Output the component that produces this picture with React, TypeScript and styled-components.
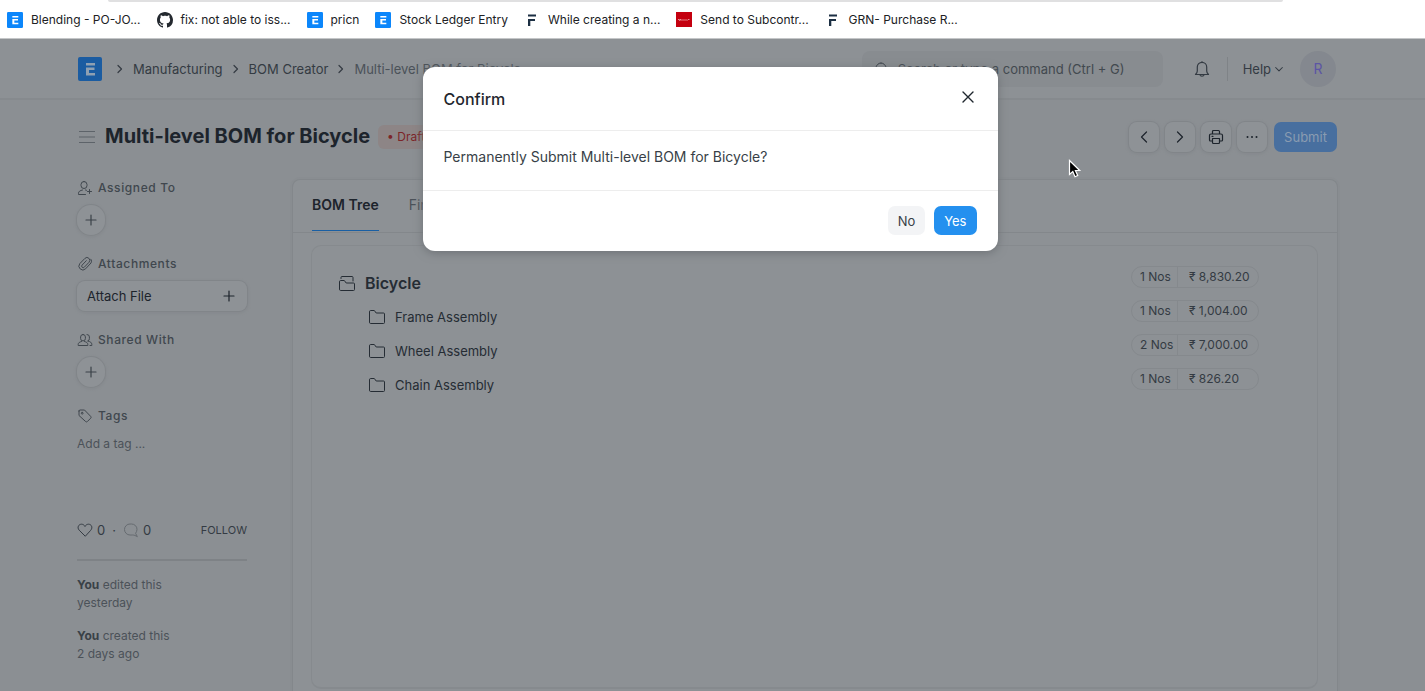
import React from "react";
import styled, { createGlobalStyle } from "styled-components";

const ink = "#1d242c";
const body = "#343b43";
const muted = "#4b5259";
const line = "#83878b";
const canvas = "#8b8f93";
const surface = "#8d9195";

const Global = createGlobalStyle`
  * { box-sizing: border-box; }
  body { margin: 0; background: ${canvas}; }
  body, button, input { font-family: Inter, "Liberation Sans", sans-serif; font-size: 13px; line-height: 18px; color: ${body}; }
  button { border: 0; padding: 0; background: none; cursor: pointer; }
  a { color: inherit; text-decoration: none; }
  h1, h2, p, ul { margin: 0; padding: 0; }
  ul { list-style: none; }
  svg { display: block; flex: none; }
`;

const Screen = styled.div`
  position: relative;
  display: flex;
  flex-direction: column;
  min-height: 100vh;
  overflow: hidden;
`;

/* Browser chrome */
const Chrome = styled.div`
  background: #fff;
  height: 39px;
  border-bottom: 1px solid #c4c6c8;
`;
const AddressEdge = styled.div`
  height: 2px;
  margin: 0 142px 0 108px;
  background: #e0e0e1;
  border-radius: 0 0 8px 8px;
`;
const Bookmarks = styled.nav`
  display: flex;
  gap: 16px;
  padding: 9px 7px 0;
`;
const Bookmark = styled.a`
  display: flex;
  align-items: center;
  gap: 8px;
  font-size: 12px;
  color: #202124;
  white-space: nowrap;
`;

/* Navigation bar */
const Navbar = styled.header`
  display: flex;
  align-items: center;
  height: 61px;
  padding: 0 89px 0 78px;
  border-bottom: 2px solid #868a8e;
  background: ${surface};
`;
const Crumbs = styled.nav`
  display: flex;
  align-items: center;
  flex: 1;
  gap: 5px;
  color: ${body};
  white-space: nowrap;
`;
const Home = styled.a`
  margin-right: 5px;
`;
const Current = styled.span`
  color: ${muted};
`;
const Search = styled.label`
  display: flex;
  align-items: center;
  gap: 8px;
  width: 301px;
  height: 36px;
  padding: 0 12px;
  border-radius: 8px;
  background: #888c90;
`;
const SearchInput = styled.input`
  flex: 1;
  min-width: 0;
  border: 0;
  padding: 0;
  outline: none;
  background: transparent;
  &::placeholder { color: #42494f; opacity: 1; }
`;
const IconButton = styled.button`
  display: flex;
  margin: 0 16px 0 30px;
`;
const Rule = styled.span`
  width: 1px;
  height: 24px;
  background: #7f8387;
`;
const Help = styled.button`
  display: flex;
  align-items: center;
  gap: 2px;
  margin: 0 15px 0 15px;
`;
const Avatar = styled.button`
  width: 36px;
  height: 36px;
  border-radius: 50%;
  background: #84888f;
  color: #5c55a5;
  font-size: 14px;
`;

/* Page heading */
const PageHead = styled.div`
  display: flex;
  align-items: center;
  height: 79px;
  padding: 0 88px 6px 79px;
`;
const Title = styled.h1`
  margin: 0 8px 2px 10px;
  font-size: 20px;
  line-height: 28px;
  font-weight: 700;
  color: ${ink};
  white-space: nowrap;
`;
const Status = styled.span`
  padding: 3px 9px;
  border-radius: 6px;
  background: #8d8586;
  color: #7c2529;
  font-size: 12px;
`;
const Actions = styled.div`
  display: flex;
  gap: 6px;
  margin-left: auto;
`;
const Tool = styled.button`
  display: flex;
  align-items: center;
  justify-content: center;
  width: 30px;
  height: 30px;
  border-radius: 8px;
  background: #8e9296;
  box-shadow: 0 0 0 1px #818589, 0 1px 2px 2px #878b8f;
  color: ${ink};
`;
const Submit = styled.button`
  width: 63px;
  height: 30px;
  margin-left: 1px;
  border-radius: 7px;
  background: #486f9f;
  color: #8a9cb1;
`;

/* Columns */
const Columns = styled.div`
  display: flex;
  flex: 1;
  gap: 45px;
  padding: 0 87px 0 77px;
`;
const Sidebar = styled.aside`
  width: 170px;
  flex: none;
  color: ${muted};
`;
const Section = styled.section`
  margin-bottom: 20px;
`;
const Label = styled.h2`
  display: flex;
  align-items: center;
  gap: 5px;
  margin-bottom: 8px;
  font-size: 12px;
  line-height: 18px;
  font-weight: 500;
  letter-spacing: 0.05em;
  color: #40474e;
`;
const Round = styled(Tool)`
  width: 28px;
  border-radius: 15px;
  color: #3a4148;
`;
const Attach = styled(Tool)`
  width: 100%;
  padding: 0 10px;
  justify-content: space-between;
`;
const AddTag = styled.button`
  display: block;
  margin-top: 10px;
  font-size: 12px;
  color: ${muted};
`;
const Social = styled.div`
  display: flex;
  align-items: center;
  gap: 4px;
  margin-top: 68px;
  padding-bottom: 20px;
  border-bottom: 2px solid #7e8286;
  color: ${body};
`;
const Dot = styled.span`
  margin: 0 3px;
`;
const Follow = styled.button`
  margin-left: auto;
  font-size: 11px;
`;
const Activity = styled.p`
  margin: 15px 0;
  font-size: 12px;
`;
const Strong = styled.b`
  font-weight: 700;
  color: #3a4147;
`;

const Panel = styled.main`
  display: flex;
  flex-direction: column;
  flex: 1;
  min-width: 0;
  border: 1px solid ${line};
  border-bottom: 0;
  border-radius: 8px 8px 0 0;
  box-shadow: 0 0 0 2px #898d91;
  background: ${surface};
`;
const Tabs = styled.div`
  display: flex;
  gap: 30px;
  height: 53px;
  padding: 0 19px;
  border-bottom: 1px solid ${line};
`;
const Tab = styled.button<{ $active?: boolean }>`
  height: 51px;
  border-bottom: 1px solid ${(p) => (p.$active ? "#1a5fa3" : "transparent")};
  font-size: 14px;
  font-weight: ${(p) => (p.$active ? 600 : 400)};
  color: ${(p) => (p.$active ? ink : muted)};
`;
const Tree = styled.div`
  flex: 1;
  margin: 12px 19px 2px 18px;
  padding: 20px 58px 0 26px;
  border: 1px solid #868a8e;
  border-bottom-width: 2px;
  border-radius: 10px;
`;
const Row = styled.li<{ $child?: boolean }>`
  display: flex;
  align-items: center;
  height: 34px;
  padding-left: ${(p) => (p.$child ? 30 : 0)}px;
`;
const Name = styled.span<{ $root?: boolean }>`
  margin-left: 9px;
  font-size: ${(p) => (p.$root ? 16 : 13)}px;
  font-weight: ${(p) => (p.$root ? 600 : 400)};
  color: #252c34;
`;
const Pill = styled.span`
  display: grid;
  grid-template-columns: 46px 80px;
  align-self: flex-start;
  height: 22px;
  margin-left: auto;
  border: 1px solid #85898d;
  border-radius: 11px;
  font-size: 12px;
  line-height: 20px;
  color: ${body};
`;
const Qty = styled.span`
  padding-left: 8px;
  border-right: 1px solid #85898d;
`;
const Amount = styled.span`
  padding-left: 11px;
`;

/* Dialog */
const Layer = styled.div`
  position: absolute;
  inset: 67px 5px auto 0;
  display: flex;
  justify-content: center;
`;
const Dialog = styled.div`
  width: 575px;
  border-radius: 12px;
  background: #fff;
  box-shadow: 0 2px 10px #6e7276;
`;
const DialogHead = styled.div`
  display: flex;
  justify-content: space-between;
  align-items: center;
  height: 64px;
  padding: 0 21px;
  border-bottom: 1px solid #ededed;
`;
const DialogTitle = styled.h2`
  font-size: 16px;
  line-height: 24px;
  font-weight: 500;
  color: #1f272e;
`;
const Close = styled.button`
  display: flex;
  padding: 0 2px 4px;
`;
const DialogBody = styled.p`
  height: 60px;
  padding: 16px 21px;
  border-bottom: 1px solid #ededed;
  font-size: 14px;
  line-height: 20px;
  color: #383f47;
`;
const DialogFoot = styled.div`
  display: flex;
  justify-content: flex-end;
  gap: 9px;
  padding: 15px 21px 16px;
`;
const Choice = styled.button<{ $primary?: boolean }>`
  height: 29px;
  padding: 0 10px;
  border-radius: 7px;
  background: ${(p) => (p.$primary ? "#2490ef" : "#f3f4f6")};
  color: ${(p) => (p.$primary ? "#fff" : "#383f47")};
`;
const Pointer = styled.svg`
  position: absolute;
  left: 1068px;
  top: 159px;
`;

const Stroke = ({ size = 16, color = "currentColor", w = 1, d, vb = 16 }: { size?: number; color?: string; w?: number; d: string; vb?: number }) => (
  <svg width={size} height={size} viewBox={`0 0 ${vb} ${vb}`} fill="none" stroke={color} strokeWidth={w} strokeLinecap="round" strokeLinejoin="round" aria-hidden="true">
    <path d={d} />
  </svg>
);

const ErpLogo = ({ size, bg, fg }: { size: number; bg: string; fg: string }) => (
  <svg width={size} height={size} viewBox="0 0 24 24" aria-hidden="true">
    <rect width="24" height="24" rx="2" fill={bg} />
    <path d="M8 6h9v2.400H8zM8 10.500h8.500v2.400h-5.500v3.200H17v2.400H8z" fill={fg} />
  </svg>
);
const FrappeLogo = () => (
  <svg width="16" height="16" viewBox="0 0 16 16" aria-hidden="true">
    <path d="M4 2.500h8v2H4zM4 7h7v2H6.300v5H4z" fill="#1c2f43" />
  </svg>
);
const GitHubLogo = () => (
  <svg width="16" height="16" viewBox="0 0 16 16" aria-hidden="true">
    <path fill="#24292f" d="M8 0C3.580 0 0 3.580 0 8c0 3.540 2.290 6.530 5.470 7.590.4.070.55-.17.55-.38 0-.19-.01-.82-.01-1.490-2.010.37-2.530-.49-2.690-.94-.09-.23-.48-.94-.82-1.130-.28-.15-.68-.52-.01-.53.63-.01 1.080.58 1.230.82.72 1.210 1.870.87 2.330.66.070-.52.28-.87.51-1.070-1.780-.2-3.640-.89-3.640-3.950 0-.87.31-1.590.82-2.150-.08-.2-.36-1.020.08-2.120 0 0 .67-.21 2.200.82.64-.18 1.320-.27 2-.27s1.360.09 2 .27c1.530-1.040 2.200-.82 2.200-.82.44 1.100.16 1.920.08 2.120.51.56.82 1.270.82 2.150 0 3.070-1.870 3.750-3.650 3.950.29.25.54.73.54 1.480 0 1.070-.01 1.930-.01 2.200 0 .21.15.46.55.38A8.010 8.010 0 0 0 16 8c0-4.420-3.580-8-8-8z" />
  </svg>
);
const RedLogo = () => (
  <svg width="16" height="16" viewBox="0 0 16 16" aria-hidden="true">
    <rect width="16" height="15" fill="#c4000f" />
    <path d="M2 7.500h1l.5 1 .7-1.500.8 1.500 1-1 1 1 1-1 1 1 1-1 1 1 1-1h1.500" fill="none" stroke="#f0b0b4" strokeWidth=".8" />
  </svg>
);

const icons = {
  right: "M6 4.500 9.500 8 6 11.500",
  plus: "M8 3v10M3 8h10",
  user: "M7 1.500a3 3 0 0 1 3 3v1a3 3 0 0 1-6 0v-1a3 3 0 0 1 3-3zM8.500 14.500H1.500v-1.200c0-1.800 1.500-2.800 4-3.300M8.500 10l1 .3M12.500 9.500v4M10.500 11.500h4",
  clip: "M13.800 7.200 8.600 12.800a3.900 3.900 0 0 1-5.800-5.200L7.900 2.400a2.800 2.800 0 0 1 4.100 3.900L7.300 11.200a1.500 1.500 0 0 1-2.200-2.100l4.200-4.400M13.800 7.200c1-1.200 1-2.800 0-4",
  users: "M6 2.500a2.400 2.400 0 0 1 2.400 2.400v1.600a2.400 2.400 0 0 1-4.800 0V4.900A2.400 2.400 0 0 1 6 2.500zM4.500 9.500c-2 .5-3.300 1.300-3.300 2.900v1.100h9.600v-1.100c0-1.600-1.300-2.400-3.300-2.900M10 2.500a2.400 2.400 0 0 1 2.400 2.400v1.600A2.400 2.400 0 0 1 10.600 9c2.800.6 4.200 1.600 4.200 3.400v1.100H13",
  tag: "M2 3v4.500l6.600 6a1.300 1.300 0 0 0 1.800 0l3.300-3.300a1.300 1.300 0 0 0 0-1.800L7.500 2H3a1 1 0 0 0-1 1zM5.200 4.300a.9.9 0 1 1 0 1.800.9.9 0 0 1 0-1.800",
  heart: "M8 14 2.200 8.200C-.2 5.500 1.600 2.200 4.500 2.200c1.500 0 2.800.9 3.500 2.300.7-1.400 2-2.300 3.500-2.300 2.900 0 4.700 3.300 2.300 6z",
  chat: "M14 14.500c-1.500-.8-2.700-1.500-4.200-1.500H7A5.500 5.500 0 0 1 7 2h1.500c3 0 5.500 2.300 5.500 5.300 0 1.500-.6 2.800-1.200 3.700z",
  folder: "M1.500 3.500a1 1 0 0 1 1-1h3.800l1.900 2.500h7.300a1 1 0 0 1 1 1v8.500a1 1 0 0 1-1 1h-13a1 1 0 0 1-1-1z",
  open: "M1.500 7.500a1 1 0 0 1 1-1h3.800L8.200 9h7.300a1 1 0 0 1 1 1v5.500a1 1 0 0 1-1 1h-13a1 1 0 0 1-1-1zM3 4.500v-1a1 1 0 0 1 1-1h10a1 1 0 0 1 1 1v3.500",
};

const bookmarks: [string, React.ReactNode][] = [
  ["Blending - PO-JO...", <ErpLogo size={16} bg="#0b86fb" fg="#fff" />],
  ["fix: not able to iss...", <GitHubLogo />],
  ["pricn", <ErpLogo size={16} bg="#0b86fb" fg="#fff" />],
  ["Stock Ledger Entry", <ErpLogo size={16} bg="#0b86fb" fg="#fff" />],
  ["While creating a n...", <FrappeLogo />],
  ["Send to Subcontr...", <RedLogo />],
  ["GRN- Purchase R...", <FrappeLogo />],
];

const items = [
  { name: "Bicycle", qty: "1 Nos", amount: "₹ 8,830.20" },
  { name: "Frame Assembly", qty: "1 Nos", amount: "₹ 1,004.00" },
  { name: "Wheel Assembly", qty: "2 Nos", amount: "₹ 7,000.00" },
  { name: "Chain Assembly", qty: "1 Nos", amount: "₹ 826.20" },
];

export default function App() {
  return (
    <Screen>
      <Global />
      <Chrome>
        <AddressEdge />
        <Bookmarks aria-label="Bookmarks">
          {bookmarks.map(([text, icon]) => (
            <Bookmark href="#" key={text}>{icon}{text}</Bookmark>
          ))}
        </Bookmarks>
      </Chrome>

      <Navbar>
        <Crumbs aria-label="Breadcrumb">
          <Home href="#" aria-label="Home"><ErpLogo size={24} bg="#1b5ca1" fg="#8fa0b2" /></Home>
          <Stroke d={icons.right} w={1.2} />
          <a href="#">Manufacturing</a>
          <Stroke d={icons.right} w={1.2} />
          <a href="#">BOM Creator</a>
          <Stroke d={icons.right} w={1.2} />
          <Current>Multi-level BOM for Bicycle</Current>
        </Crumbs>
        <Search>
          <Stroke d="M7 2a5 5 0 1 1 0 10A5 5 0 0 1 7 2M11 11l3 3" />
          <SearchInput placeholder="Search or type a command (Ctrl + G)" aria-label="Search" />
        </Search>
        <IconButton aria-label="Notifications">
          <Stroke size={18} vb={18} w={1.2} d="M2.500 14.500h13c-1-1-1.800-2-1.800-3.500V7a4.700 4.700 0 0 0-9.400 0v4c0 1.500-.8 2.500-1.800 3.500zM7 15c.3 1.500 3.700 1.500 4 0M9 2.200V1.500" />
        </IconButton>
        <Rule />
        <Help>Help<Stroke d="M3.500 6 8 10.500 12.500 6" size={12} w={1.4} /></Help>
        <Avatar>R</Avatar>
      </Navbar>

      <PageHead>
        <Stroke d="M.5 2.500h15M.5 8h15M.5 13.500h15" color="#5d6369" w={1.2} />
        <Title>Multi-level BOM for Bicycle</Title>
        <Status>• Draft</Status>
        <Actions>
          <Tool aria-label="Previous"><Stroke d="M10.500 3 5.500 8l5 5" w={1.2} /></Tool>
          <Tool aria-label="Next"><Stroke d="m5.500 3 5 5-5 5" w={1.2} /></Tool>
          <Tool aria-label="Print"><Stroke d="M4.500 5V2.500a1 1 0 0 1 1-1h5a1 1 0 0 1 1 1V5M4.500 12h-2a1 1 0 0 1-1-1V6.500A1.500 1.500 0 0 1 3 5h10a1.500 1.500 0 0 1 1.500 1.500V11a1 1 0 0 1-1 1h-2M4.500 9.500h7v4a1 1 0 0 1-1 1h-5a1 1 0 0 1-1-1zM4 7.300h1" w={1.2} /></Tool>
          <Tool aria-label="More"><Stroke d="M3.500 8h.01M8 8h.01M12.500 8h.01" w={2} /></Tool>
          <Submit>Submit</Submit>
        </Actions>
      </PageHead>

      <Columns>
        <Sidebar>
          <Section>
            <Label><Stroke d={icons.user} />Assigned To</Label>
            <Round aria-label="Assign"><Stroke d={icons.plus} w={1.2} /></Round>
          </Section>
          <Section>
            <Label><Stroke d={icons.clip} />Attachments</Label>
            <Attach>Attach File<Stroke d={icons.plus} w={1.2} /></Attach>
          </Section>
          <Section>
            <Label><Stroke d={icons.users} />Shared With</Label>
            <Round aria-label="Share"><Stroke d={icons.plus} w={1.2} /></Round>
          </Section>
          <Section>
            <Label><Stroke d={icons.tag} />Tags</Label>
            <AddTag>Add a tag ...</AddTag>
          </Section>
          <Social>
            <Stroke d={icons.heart} /> 0 <Dot>·</Dot> <Stroke d={icons.chat} color="#666b70" /> 0
            <Follow>FOLLOW</Follow>
          </Social>
          <Activity><Strong>You</Strong> edited this<br />yesterday</Activity>
          <Activity><Strong>You</Strong> created this<br />2 days ago</Activity>
        </Sidebar>

        <Panel>
          <Tabs role="tablist">
            <Tab role="tab" aria-selected="true" $active>BOM Tree</Tab>
            <Tab role="tab" aria-selected="false">Final Product</Tab>
          </Tabs>
          <Tree>
            <ul>
              {items.map((item, i) => (
                <Row key={item.name} $child={i > 0}>
                  <Stroke d={i ? icons.folder : icons.open} size={18} vb={18} color="#252c34" />
                  <Name $root={i === 0}>{item.name}</Name>
                  <Pill><Qty>{item.qty}</Qty><Amount>{item.amount}</Amount></Pill>
                </Row>
              ))}
            </ul>
          </Tree>
        </Panel>
      </Columns>

      <Layer>
        <Dialog role="dialog" aria-modal="true" aria-labelledby="confirm-title">
          <DialogHead>
            <DialogTitle id="confirm-title">Confirm</DialogTitle>
            <Close aria-label="Close"><Stroke size={14} vb={14} w={1.4} color="#1f272e" d="m2 2 10 10M12 2 2 12" /></Close>
          </DialogHead>
          <DialogBody>Permanently Submit Multi-level BOM for Bicycle?</DialogBody>
          <DialogFoot>
            <Choice>No</Choice>
            <Choice $primary>Yes</Choice>
          </DialogFoot>
        </Dialog>
      </Layer>

      <Pointer width="14" height="20" viewBox="0 0 14 20" aria-hidden="true">
        <path d="M1.500 1.500v14l3.300-3 2.200 5.200 2.700-1.200-2.300-5h4.300z" fill="#000" stroke="#fff" strokeWidth="1.200" />
      </Pointer>
    </Screen>
  );
}
